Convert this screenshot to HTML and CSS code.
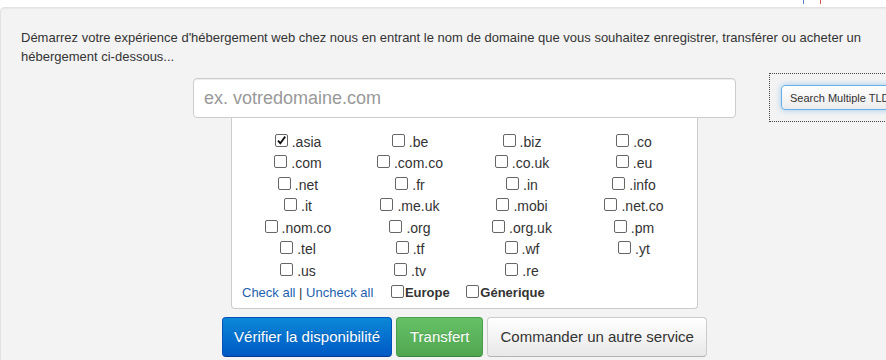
FILE: index.html
```html
<!DOCTYPE html>
<html lang="fr">
<head>
<meta charset="utf-8">
<title>Domaine</title>
<link rel="stylesheet" href="styles.css">
</head>
<body>
<div class="marks"><span class="mark mark-blue"></span><span class="mark mark-red"></span></div>
<div class="well">
  <p class="intro">Démarrez votre expérience d'hébergement web chez nous en entrant le nom de domaine que vous souhaitez enregistrer, transférer ou acheter un hébergement ci-dessous...</p>
  <div class="form-row">
    <div class="main-col">
      <input class="domain-input" type="text" placeholder="ex. votredomaine.com">
      <div class="tld-panel">
        <div class="tld-grid">
          <label class="tld"><input type="checkbox" class="cb" checked>.asia</label>
          <label class="tld"><input type="checkbox" class="cb">.be</label>
          <label class="tld"><input type="checkbox" class="cb">.biz</label>
          <label class="tld"><input type="checkbox" class="cb">.co</label>
          <label class="tld"><input type="checkbox" class="cb">.com</label>
          <label class="tld"><input type="checkbox" class="cb">.com.co</label>
          <label class="tld"><input type="checkbox" class="cb">.co.uk</label>
          <label class="tld"><input type="checkbox" class="cb">.eu</label>
          <label class="tld"><input type="checkbox" class="cb">.net</label>
          <label class="tld"><input type="checkbox" class="cb">.fr</label>
          <label class="tld"><input type="checkbox" class="cb">.in</label>
          <label class="tld"><input type="checkbox" class="cb">.info</label>
          <label class="tld"><input type="checkbox" class="cb">.it</label>
          <label class="tld"><input type="checkbox" class="cb">.me.uk</label>
          <label class="tld"><input type="checkbox" class="cb">.mobi</label>
          <label class="tld"><input type="checkbox" class="cb">.net.co</label>
          <label class="tld"><input type="checkbox" class="cb">.nom.co</label>
          <label class="tld"><input type="checkbox" class="cb">.org</label>
          <label class="tld"><input type="checkbox" class="cb">.org.uk</label>
          <label class="tld"><input type="checkbox" class="cb">.pm</label>
          <label class="tld"><input type="checkbox" class="cb">.tel</label>
          <label class="tld"><input type="checkbox" class="cb">.tf</label>
          <label class="tld"><input type="checkbox" class="cb">.wf</label>
          <label class="tld"><input type="checkbox" class="cb">.yt</label>
          <label class="tld"><input type="checkbox" class="cb">.us</label>
          <label class="tld"><input type="checkbox" class="cb">.tv</label>
          <label class="tld"><input type="checkbox" class="cb">.re</label>
        </div>
        <div class="tld-actions">
          <a href="#" class="link">Check all</a> | <a href="#" class="link">Uncheck all</a>
          <label class="group"><input type="checkbox" class="cb cb-tight">Europe</label>
          <label class="group"><input type="checkbox" class="cb cb-tight">Génerique</label>
        </div>
      </div>
      <div class="buttons">
        <button class="btn btn-primary">Vérifier la disponibilité</button>
        <button class="btn btn-success">Transfert</button>
        <button class="btn btn-default">Commander un autre service</button>
      </div>
    </div>
    <div class="side-box">
      <button class="btn-small">Search Multiple TLDs</button>
    </div>
  </div>
</div>
</body>
</html>
```

FILE: styles.css
```css
html, body {
  margin: 0;
  padding: 0;
  background: #ffffff;
  overflow: hidden;
}
body {
  font-family: "Liberation Sans", Arial, sans-serif;
  color: #333333;
  width: 886px;
  height: 360px;
  position: relative;
}
.marks {
  position: absolute;
  top: 0;
  left: 0;
}
.mark {
  position: absolute;
  top: 0;
  width: 1px;
  height: 4px;
}
.mark-blue { left: 803px; background: #5b84c4; }
.mark-red { left: 820px; background: #d9534f; }

.well {
  margin-top: 7px;
  width: 1000px;
  height: 400px;
  box-sizing: border-box;
  background: #f3f3f3;
  border: 1px solid #e3e3e3;
  border-radius: 4px;
  padding: 20px 0 0 20px;
  box-shadow: inset 0 1px 1px rgba(0,0,0,0.04);
}
.intro {
  margin: 0;
  font-size: 13px;
  line-height: 19px;
  width: 850px;
}
.form-row {
  display: flex;
  align-items: flex-start;
  margin-top: 7px;
  padding-left: 172px;
}
.main-col {
  width: 543px;
  display: flex;
  flex-direction: column;
  align-items: center;
  margin-top: 5px;
}
.domain-input {
  width: 543px;
  height: 40px;
  box-sizing: border-box;
  border: 1px solid #cccccc;
  border-radius: 4px;
  padding: 0 10px;
  font-family: "Liberation Sans", Arial, sans-serif;
  font-size: 18px;
  color: #555;
  background: #fff;
  box-shadow: inset 0 1px 1px rgba(0,0,0,0.075);
  outline: none;
}
.domain-input::placeholder { color: #999999; }
.tld-panel {
  width: 467px;
  box-sizing: border-box;
  background: #ffffff;
  border: 1px solid #cccccc;
  border-top: none;
  border-radius: 0 0 4px 4px;
  padding: 13px 9px 4px 10px;
}
.tld-grid {
  display: grid;
  grid-template-columns: repeat(4, 112px);
  grid-auto-rows: 21.5px;
}
.tld {
  display: flex;
  align-items: center;
  justify-content: center;
  font-size: 14px;
  color: #333;
  white-space: nowrap;
}
.cb {
  -webkit-appearance: none;
  appearance: none;
  width: 13px;
  height: 13px;
  margin: 0 4px 3px 0;
  box-sizing: border-box;
  border: 1px solid #666666;
  border-radius: 2px;
  background: #fff;
  flex: none;
}
.cb:checked {
  background: #fff url("data:image/svg+xml,%3Csvg xmlns='http://www.w3.org/2000/svg' viewBox='0 0 11 11'%3E%3Cpath d='M2 5.6 L4.3 8.2 L9.2 1.6' fill='none' stroke='%23111' stroke-width='1.8'/%3E%3C/svg%3E") center/11px 11px no-repeat;
}
.tld-actions {
  height: 22px;
  line-height: 22px;
  font-size: 13px;
  color: #333;
  white-space: nowrap;
}
.link {
  color: #1d5fae;
  text-decoration: none;
}
.group {
  font-weight: bold;
  margin-left: 14px;
}
.group + .group { margin-left: 13px; }
.cb-tight {
  margin: 0 1px 0 0;
  vertical-align: -1px;
}
.buttons {
  display: flex;
  gap: 4px;
  margin-top: 8px;
}
.btn {
  height: 40px;
  box-sizing: border-box;
  padding: 0 12px;
  font-family: "Liberation Sans", Arial, sans-serif;
  font-size: 15px;
  border-radius: 4px;
  border: 1px solid;
  cursor: pointer;
}
.btn-primary {
  padding: 0 11px;
  color: #fff;
  background: linear-gradient(to bottom, #0b88d8, #0059c5);
  border-color: #0052b8 #0052b8 #003a90;
  text-shadow: 0 -1px 0 rgba(0,0,0,0.2);
}
.btn-success {
  padding: 0 13px;
  color: #fff;
  background: linear-gradient(to bottom, #66c166, #50a650);
  border-color: #4a9d4a #4a9d4a #3d853d;
  text-shadow: 0 -1px 0 rgba(0,0,0,0.15);
}
.btn-default {
  color: #333;
  background: linear-gradient(to bottom, #ffffff, #e8e8e8);
  border-color: #cccccc #cccccc #b3b3b3;
}
.side-box {
  margin-left: 33px;
  border: 1px dotted #444;
  padding: 11px 12px 11px 11px;
  flex: none;
}
.btn-small {
  display: block;
  height: 25px;
  box-sizing: border-box;
  padding: 0 8px;
  font-family: "Liberation Sans", Arial, sans-serif;
  font-size: 11px;
  color: #333;
  background: linear-gradient(to bottom, #ffffff, #ececec);
  border: 1px solid #66afe9;
  border-radius: 4px;
  box-shadow: 0 0 6px rgba(102,175,233,0.6);
  white-space: nowrap;
}
```
